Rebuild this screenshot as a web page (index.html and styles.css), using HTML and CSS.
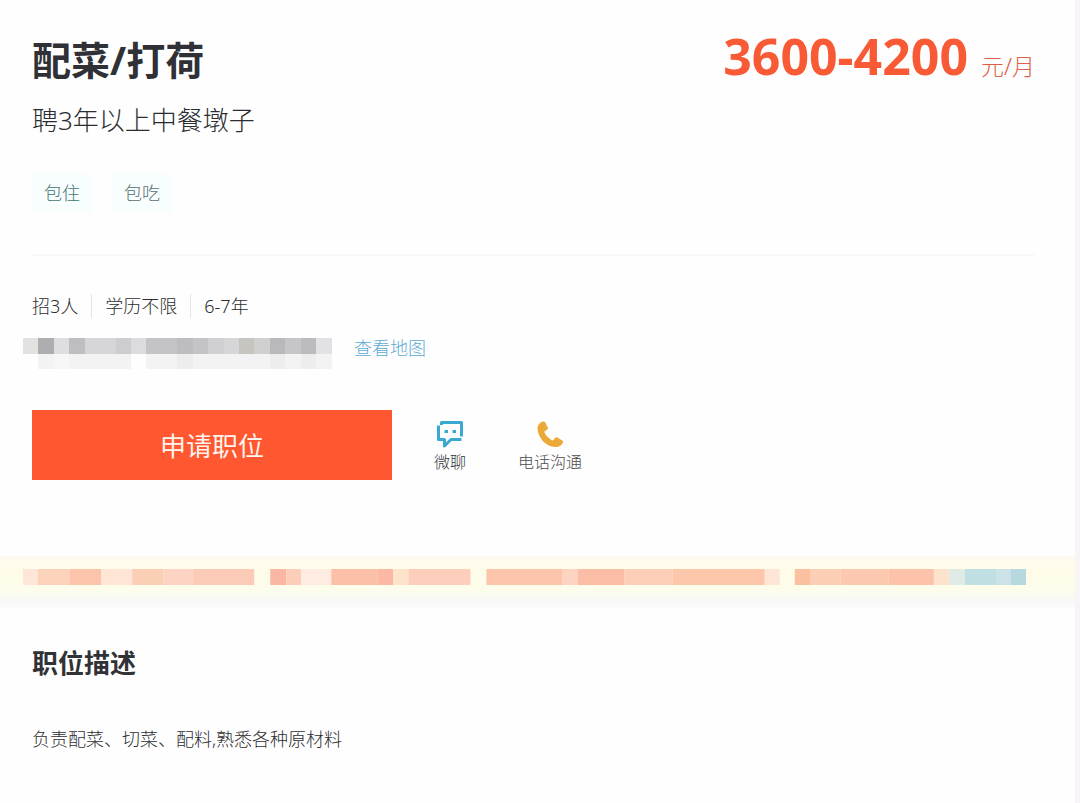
FILE: index.html
```
<!DOCTYPE html>
<html lang="zh-CN">
<head>
    <meta charset="UTF-8">
    <meta name="viewport" content="width=device-width, initial-scale=1.0">
    <title>配菜/打荷</title>
    <link rel="stylesheet" href="styles.css">
</head>
<body>

    <main class="page">
        <section class="job">
            <header class="job-header">
                <h1 class="job-title">配菜/打荷</h1>
                <p class="salary">3600-4200 <span class="salary-unit">元/月</span></p>
            </header>
            <p class="job-subtitle">聘3年以上中餐墩子</p>
            <ul class="tags">
                <li class="tag tag-green">包住</li>
                <li class="tag">包吃</li>
            </ul>

            <ul class="meta">
                <li>招3人</li>
                <li>学历不限</li>
                <li>6-7年</li>
            </ul>
            <div class="address">
                <svg class="address-mask" viewBox="0 0 309 32" preserveAspectRatio="none" aria-hidden="true">
                    <rect x="0" y="0" width="309" height="16" fill="#d6d6d8"/>
                    <rect x="0" y="0" width="15" height="16" fill="#e2e2e0"/>
                    <rect x="15" y="0" width="16" height="16" fill="#aeaeb0"/>
                    <rect x="31" y="0" width="15" height="16" fill="#dedee2"/>
                    <rect x="46" y="0" width="16" height="16" fill="#bebec0"/>
                    <rect x="93" y="0" width="15" height="16" fill="#cdcdcf"/>
                    <rect x="108" y="0" width="15" height="16" fill="#dcdce0"/>
                    <rect x="123" y="0" width="31" height="16" fill="#c4c4c6"/>
                    <rect x="154" y="0" width="16" height="16" fill="#bdbdbf"/>
                    <rect x="170" y="0" width="15" height="16" fill="#c4c4c6"/>
                    <rect x="185" y="0" width="16" height="16" fill="#d0d0d4"/>
                    <rect x="216" y="0" width="15" height="16" fill="#c6c5c0"/>
                    <rect x="231" y="0" width="16" height="16" fill="#d0d0d0"/>
                    <rect x="247" y="0" width="15" height="16" fill="#b9b9bb"/>
                    <rect x="262" y="0" width="16" height="16" fill="#c6c6c8"/>
                    <rect x="278" y="0" width="15" height="16" fill="#bcbcbe"/>
                    <rect x="293" y="0" width="16" height="16" fill="#e2e2e6"/>
                    <rect x="15" y="16" width="93" height="15" fill="#f3f3f3"/>
                    <rect x="31" y="16" width="15" height="15" fill="#f7f7f7"/>
                    <rect x="123" y="16" width="186" height="15" fill="#f3f3f3"/>
                    <rect x="154" y="16" width="16" height="15" fill="#ededed"/>
                    <rect x="247" y="16" width="15" height="15" fill="#ededed"/>
                    <rect x="278" y="16" width="15" height="15" fill="#ededed"/>
                </svg>
                <a class="map-link" href="#">查看地图</a>
            </div>

            <div class="actions">
                <button class="apply-button" type="button">申请职位</button>
                <button class="contact contact-chat" type="button">
                    <svg class="contact-icon" viewBox="0 0 28 28" aria-hidden="true">
                        <g fill="none" stroke="#3aa9d2" stroke-width="3" stroke-linejoin="round">
                            <path d="M5.500 5V2.500H25.500V16.500"/>
                            <path d="M2.500 5.500V19.500H8.500V26L15 19.500H25.500"/>
                        </g>
                        <path d="M8.500 10h3.500v3h-3.500zM16.500 10h3.500v3h-3.500z" fill="#3aa9d2"/>
                    </svg>
                    <span>微聊</span>
                </button>
                <button class="contact contact-phone" type="button">
                    <svg class="contact-icon" viewBox="0 0 28 28" aria-hidden="true">
                        <path d="M7.500 1.500C4 2 1.500 5 1.500 8.500C2 18 10 26.500 19 27C22.500 27.500 26 25.500 27 22.500C27.300 21.500 27 21 26.200 20.400L21.500 17.500C20.500 17 19.700 17.200 19 18L17.400 20C16.800 20.500 16.200 20.500 15.500 20C12.200 17.900 9.800 15.500 8.500 12.500C8.200 11.700 8.500 11.300 9.200 10.900L11.200 9.500C12 8.900 12.200 8.200 11.700 7.200L9.300 2.400C8.900 1.600 8.300 1.400 7.500 1.500Z" fill="#eba937"/>
                    </svg>
                    <span>电话沟通</span>
                </button>
            </div>
        </section>

        <div class="notice">
            <svg class="notice-mask" viewBox="0 0 1002 16" preserveAspectRatio="none" aria-hidden="true">
                <rect x="0" y="0" width="15" height="16" fill="#fde6d8"/>
                <rect x="15" y="0" width="32" height="16" fill="#fdd2ba"/>
                <rect x="47" y="0" width="31" height="16" fill="#fcc4ab"/>
                <rect x="78" y="0" width="31" height="16" fill="#fee5d6"/>
                <rect x="109" y="0" width="31" height="16" fill="#fbcfb5"/>
                <rect x="140" y="0" width="30" height="16" fill="#fdd4c4"/>
                <rect x="170" y="0" width="61" height="16" fill="#fccbb8"/>
                <rect x="247" y="0" width="16" height="16" fill="#fbb7a4"/>
                <rect x="263" y="0" width="15" height="16" fill="#fccdb8"/>
                <rect x="278" y="0" width="30" height="16" fill="#feece2"/>
                <rect x="308" y="0" width="46" height="16" fill="#fcbfa8"/>
                <rect x="354" y="0" width="16" height="16" fill="#fbb9a4"/>
                <rect x="370" y="0" width="15" height="16" fill="#fde3c9"/>
                <rect x="385" y="0" width="62" height="16" fill="#fdcebc"/>
                <rect x="463" y="0" width="76" height="16" fill="#fcc4ab"/>
                <rect x="539" y="0" width="15" height="16" fill="#fdd3c2"/>
                <rect x="554" y="0" width="47" height="16" fill="#fcbda7"/>
                <rect x="601" y="0" width="48" height="16" fill="#fdceb8"/>
                <rect x="649" y="0" width="92" height="16" fill="#fdc7ac"/>
                <rect x="741" y="0" width="15" height="16" fill="#fee5d6"/>
                <rect x="771" y="0" width="16" height="16" fill="#fbc09f"/>
                <rect x="787" y="0" width="30" height="16" fill="#fdceb6"/>
                <rect x="817" y="0" width="48" height="16" fill="#fdc8b0"/>
                <rect x="865" y="0" width="45" height="16" fill="#fcc3aa"/>
                <rect x="910" y="0" width="15" height="16" fill="#fde3cc"/>
                <rect x="925" y="0" width="16" height="16" fill="#e0eae6"/>
                <rect x="941" y="0" width="31" height="16" fill="#bfdfe3"/>
                <rect x="972" y="0" width="15" height="16" fill="#cbe2e6"/>
                <rect x="987" y="0" width="15" height="16" fill="#b8d8e0"/>
            </svg>
        </div>

        <section class="description">
            <h2 class="description-title">职位描述</h2>
            <p class="description-text">负责配菜、切菜、配料,熟悉各种原材料</p>
        </section>
    </main>

</body>
</html>
```
FILE: styles.css
```
* {
    box-sizing: border-box;
}
body {
    font-family: "Noto Sans", "Noto Sans CJK SC", sans-serif;
    font-weight: 300;
    background-color: #f8f4f7;
    color: #2b2d31;
    margin: 0;
}
h1, h2, p, ul {
    margin: 0;
    padding: 0;
}
ul {
    display: flex;
    list-style: none;
}
button {
    font-family: inherit;
    font-weight: inherit;
    border: none;
    cursor: pointer;
}
.page {
    min-height: 100vh;
    margin-right: 5px;
    background-color: #fefefe;
}
.job {
    padding: 32px 40px 76px 32px;
}
.job-header {
    display: flex;
    justify-content: space-between;
    align-items: flex-start;
}
.job-title {
    font-size: 39px;
    line-height: 56px;
    color: #2f3136;
}
.salary {
    font-size: 50px;
    font-weight: bold;
    line-height: 48px;
    color: #f85a35;
}
.salary-unit {
    font-size: 23px;
    font-weight: 300;
    line-height: 1;
    color: #dc6048;
}
.job-subtitle {
    margin-top: 12px;
    font-size: 26px;
    line-height: 40px;
}
.tags {
    gap: 20px;
    margin-top: 34px;
    padding-bottom: 42px;
    border-bottom: 2px solid #f9f9f9;
}
.tag {
    padding: 0 12px;
    font-size: 18px;
    line-height: 38px;
    color: #5a6c72;
    background-color: #f8fdfe;
}
.tag-green {
    color: #437672;
}
.meta {
    margin-top: 38px;
    font-size: 18px;
    line-height: 24px;
}
.meta li + li {
    margin-left: 13px;
    padding-left: 13px;
    border-left: 1px solid #e2e4e8;
}
.address {
    display: flex;
    align-items: flex-start;
    gap: 22px;
    margin: 20px 0 0 -9px;
}
.address-mask {
    width: 309px;
    height: 32px;
}
.map-link {
    font-size: 18px;
    line-height: 20px;
    color: #5fabd6;
    text-decoration: none;
}
.actions {
    display: flex;
    margin-top: 40px;
}
.apply-button {
    width: 360px;
    height: 70px;
    font-size: 26px;
    font-weight: 400;
    color: #fff4ee;
    background-color: #ff572f;
}
.contact {
    display: flex;
    flex-direction: column;
    align-items: center;
    gap: 2px;
    padding: 10px 0 0;
    font-size: 16px;
    line-height: 24px;
    color: #35373b;
    background: none;
}
.contact-chat {
    margin-left: 42px;
}
.contact-phone {
    margin-left: 52px;
    color: #4c4c4e;
}
.contact-icon {
    width: 28px;
    height: 28px;
}
.notice {
    padding: 13px 49px 24px 23px;
    background: linear-gradient(#fffaf0, #fefce8 16px, #fdfdec 34px, #f6f8f6 44px, #fcfcfc);
}
.notice-mask {
    display: block;
    width: 100%;
    height: 16px;
}
.description {
    padding: 34px 32px;
}
.description-title {
    font-size: 26px;
    line-height: 40px;
    color: #303236;
}
.description-text {
    margin-top: 42px;
    font-size: 18px;
    line-height: 28px;
}
```
